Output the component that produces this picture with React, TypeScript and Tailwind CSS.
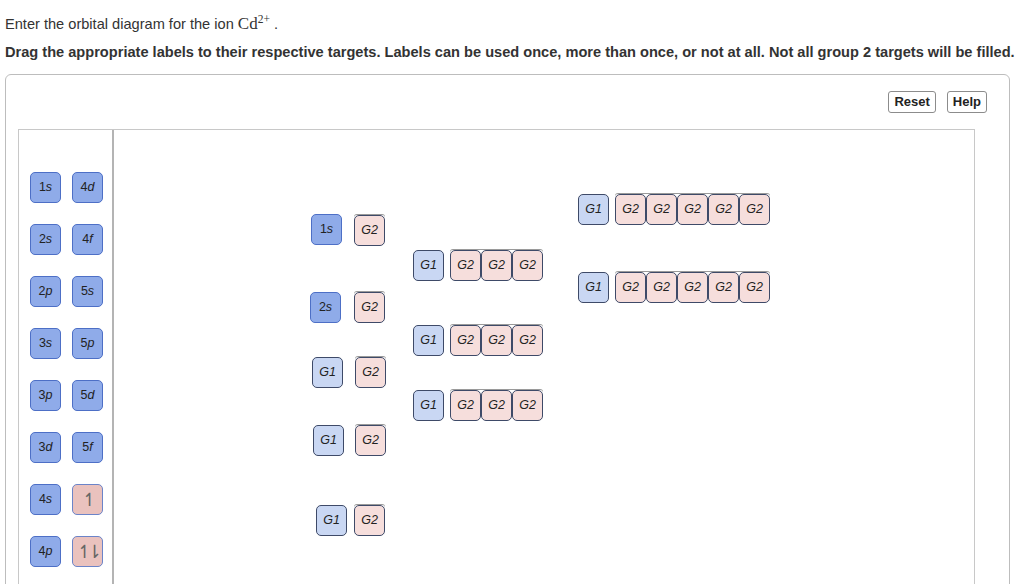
import React from "react";

type Node = { x: number; y: number; text: string };

const palette: [string, string][] = [
  ["1", "s"], ["4", "d"],
  ["2", "s"], ["4", "f"],
  ["2", "p"], ["5", "s"],
  ["3", "s"], ["5", "p"],
  ["3", "p"], ["5", "d"],
  ["3", "d"], ["5", "f"],
];

// canvas origin in page coordinates
const OX = 114;
const OY = 130;

// group 1 targets (left of each row) on the canvas
const g1: Node[] = [
  { x: 413, y: 250, text: "G1" },
  { x: 413, y: 325, text: "G1" },
  { x: 413, y: 390, text: "G1" },
  { x: 578, y: 194, text: "G1" },
  { x: 578, y: 272, text: "G1" },
  { x: 312, y: 357, text: "G1" },
  { x: 313, y: 425, text: "G1" },
  { x: 316, y: 505, text: "G1" },
];

const rows: { x: number; y: number; n: number }[] = [
  { x: 354, y: 215, n: 1 },
  { x: 354, y: 292, n: 1 },
  { x: 355, y: 357, n: 1 },
  { x: 355, y: 425, n: 1 },
  { x: 354, y: 505, n: 1 },
  { x: 450, y: 250, n: 3 },
  { x: 450, y: 325, n: 3 },
  { x: 450, y: 390, n: 3 },
  { x: 615, y: 194, n: 5 },
  { x: 615, y: 272, n: 5 },
];

const Orbital = ({ num, sub }: { num: string; sub: string }) => (
  <div className="w-[31px] h-[31px] rounded-[5px] bg-[#8fabe9] border border-[#4d6fc6] flex items-center justify-center text-[12.5px] text-[#222] font-['Liberation_Sans',Arial,sans-serif]">
    {num}
    <span className="italic">{sub}</span>
  </div>
);

const Spin = ({ text }: { text: string }) => (
  <div className="w-[31px] h-[31px] rounded-[5px] bg-[#eac2be] border border-[#6b84c9] flex items-center justify-center text-[18px] leading-none text-[#666] font-light tracking-[-5px] pr-[2px] font-['DejaVu_Sans',sans-serif]">
    {text}
  </div>
);

const Target = ({ text, blue }: { text: string; blue?: boolean }) => (
  <div
    className={
      blue
        ? "w-[31px] h-[31px] rounded-[5px] bg-[#c9d7f3] border border-[#3e4a68] flex items-center justify-center text-[12.5px] italic text-[#222] font-['Liberation_Sans',Arial,sans-serif]"
        : "w-[31px] h-[31px] rounded-[5px] bg-[#f6dedc] border border-[#3e4a68] flex items-center justify-center text-[12.5px] italic text-[#222] font-['Liberation_Sans',Arial,sans-serif]"
    }
  >
    {text}
  </div>
);

export default function App() {
  return (
    <div className="w-[1024px] h-[584px] overflow-hidden bg-white font-['Liberation_Sans',Arial,sans-serif] text-[#333]">
      <div className="pl-[5px] pt-[14px] text-[14.6px] leading-[20px]">
        Enter the orbital diagram for the ion{" "}
        <span className="font-['Liberation_Serif',serif] text-[17px]">
          Cd<sup className="text-[11.5px] -top-[6px]">2+</sup>
        </span>{" "}
        .
      </div>
      <div className="pl-[5px] pt-[9px] text-[14.6px] leading-[18px] font-bold whitespace-nowrap">
        Drag the appropriate labels to their respective targets. Labels can be used once, more than once, or not at all. Not all group 2 targets will be filled.
      </div>

      <div className="ml-[5px] mt-[13px] w-[1005px] h-[520px] border border-[#bdbdbd] rounded-[6px] pt-[16px] px-[12px]">
        <div className="flex justify-end gap-[11px] pr-[10px]">
          <button className="h-[22px] px-[5px] border border-[#8c8c8c] rounded-[3px] bg-white text-[13px] font-bold text-[#222]">
            Reset
          </button>
          <button className="h-[22px] px-[5px] border border-[#8c8c8c] rounded-[3px] bg-white text-[13px] font-bold text-[#222]">
            Help
          </button>
        </div>

        <div className="mt-[16px] w-[957px] h-[480px] border border-[#c8c8c8] flex">
          <div className="w-[95px] shrink-0 border-r-2 border-[#b4b4b4] pl-[11px] pt-[42px] grid grid-cols-[31px_31px] gap-x-[11px] gap-y-[21px] content-start">
            {palette.map(([n, s], i) => (
              <Orbital key={i} num={n} sub={s} />
            ))}
            <Orbital num="4" sub="s" />
            <Spin text="↿" />
            <Orbital num="4" sub="p" />
            <Spin text="↿⇂" />
          </div>

          <div className="relative flex-1">
            <div className="absolute left-[197px] top-[84px]">
              <Orbital num="1" sub="s" />
            </div>
            <div className="absolute left-[196px] top-[162px]">
              <Orbital num="2" sub="s" />
            </div>

            {g1.map((t, i) => (
              <div key={i} className="absolute" style={{ left: t.x - OX, top: t.y - OY }}>
                <Target text={t.text} blue />
              </div>
            ))}

            {rows.map((r, i) => (
              <div
                key={i}
                className="absolute flex shadow-[0_-1px_0_#9a9a9a] rounded-[3px]"
                style={{ left: r.x - OX, top: r.y - OY }}
              >
                {Array.from({ length: r.n }).map((_, j) => (
                  <Target key={j} text="G2" />
                ))}
              </div>
            ))}
          </div>
        </div>
      </div>
    </div>
  );
}
